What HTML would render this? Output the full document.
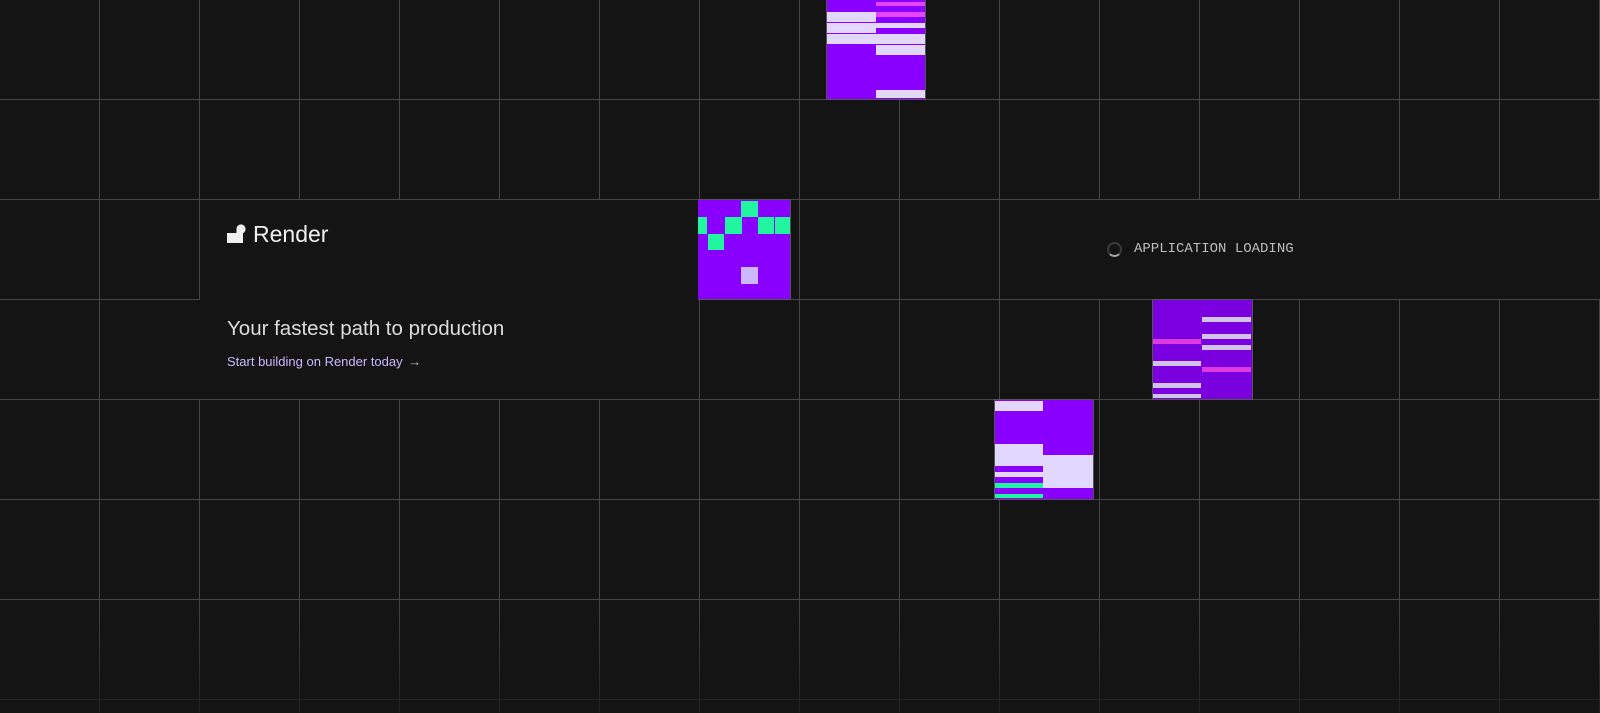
<!DOCTYPE html>
<html><head><style>
html,body{margin:0;padding:0;}
body{width:1600px;height:713px;overflow:hidden;background:#141414;position:relative;font-family:"Liberation Sans",sans-serif;}
.grid{position:absolute;left:0;top:0;width:1600px;height:713px;
background-image:linear-gradient(to right,#444 1px,transparent 1px),linear-gradient(to bottom,#444 1px,transparent 1px);
background-size:100px 100px;background-position:99px 99px;}
.fade{position:absolute;left:0;top:600px;width:1600px;height:113px;background:linear-gradient(to bottom,rgba(20,20,20,0),rgba(20,20,20,0.75));}
.abs{position:absolute;}
.blk{position:absolute;box-sizing:border-box;border:1px solid #555;overflow:hidden;}
.blk div{position:absolute;}
.L{background:#e2d8ff;}
.P{background:#8a00ff;}
.M{background:#e545ff;}
.G{background:#22f5a0;}
</style></head><body>
<div class="grid"></div>
<div class="fade"></div>

<!-- card -->
<div class="abs" style="left:200px;top:200px;width:499px;height:199px;background:#141414"></div>
<div class="abs" style="left:199px;top:300px;width:500px;height:99px;background:#141414"></div>
<div class="abs" style="left:226px;top:224px;width:20px;height:20px">
<svg width="20" height="20" viewBox="0 0 20 20"><rect x="1" y="9" width="10" height="10" fill="#f0f0f0"/><circle cx="15" cy="5" r="4.6" fill="#f0f0f0"/><path d="M10.5 6 L19 7 L17 9.5 L17 19 L10 19 Z" fill="#f0f0f0"/></svg>
</div>
<div class="abs" style="left:253px;top:221px;font-size:23px;color:#f0f0f0;">Render</div>
<div class="abs" style="left:227px;top:317px;font-size:20.5px;color:#dcdcdc;">Your fastest path to production</div>
<div class="abs" style="left:227px;top:354px;font-size:13px;color:#c8b8ff;">Start building on Render today <span style="color:#bbb;margin-left:2px">→</span></div>

<!-- loading panel -->
<div class="abs" style="left:1001px;top:200px;width:599px;height:99px;background:#141414"></div>
<div class="abs" style="left:1107px;top:242px;width:11px;height:11px;border:2px solid #3a3a3a;border-bottom-color:#aaa;border-radius:50%"></div>
<div class="abs" style="left:1134px;top:241px;font-family:'Liberation Mono',monospace;font-size:14px;color:#bdbdbd;">APPLICATION LOADING</div>

<!-- block A -->
<div class="blk" style="left:826px;top:-1px;width:100px;height:101px;background:#8a00ff">
<div class="L" style="left:0;top:12px;width:49px;height:10px"></div>
<div class="L" style="left:0;top:23px;width:49px;height:10px"></div>
<div class="L" style="left:0;top:34px;width:49px;height:10px"></div>
<div class="M" style="left:49px;top:2px;width:50px;height:4px"></div>
<div class="M" style="left:49px;top:12px;width:50px;height:5px"></div>
<div class="L" style="left:49px;top:23px;width:50px;height:5px"></div>
<div class="L" style="left:49px;top:34px;width:50px;height:10px"></div>
<div class="L" style="left:49px;top:45px;width:50px;height:10px"></div>
<div class="L" style="left:49px;top:90px;width:50px;height:8px"></div>
</div>

<!-- block B -->
<div class="blk" style="left:698px;top:199px;width:93px;height:101px;background:#8a00ff;border-left:none">
<div class="G" style="left:43px;top:1px;width:17px;height:16px"></div>
<div class="G" style="left:0;top:17px;width:9px;height:17px"></div>
<div class="G" style="left:27px;top:17px;width:17px;height:17px"></div>
<div class="G" style="left:60px;top:17px;width:16px;height:17px"></div>
<div class="G" style="left:77px;top:17px;width:15px;height:17px"></div>
<div class="G" style="left:10px;top:34px;width:16px;height:16px"></div>
<div style="left:43px;top:67px;width:17px;height:17px;background:#ccb8ff"></div>
</div>

<!-- block C -->
<div class="blk" style="left:1152px;top:299px;width:101px;height:101px;background:#7a00e0">
<div style="left:0;top:39px;width:48px;height:5px;background:#dd3ae0"></div>
<div style="left:0;top:61px;width:48px;height:5px;background:#d0c4ee"></div>
<div style="left:0;top:83px;width:48px;height:5px;background:#d0c4ee"></div>
<div style="left:0;top:94px;width:48px;height:4px;background:#d0c4ee"></div>
<div style="left:49px;top:17px;width:49px;height:5px;background:#d0c4ee"></div>
<div style="left:49px;top:34px;width:49px;height:5px;background:#d0c4ee"></div>
<div style="left:49px;top:45px;width:49px;height:5px;background:#d0c4ee"></div>
<div style="left:49px;top:67px;width:49px;height:5px;background:#dd3ae0"></div>
</div>

<!-- block D -->
<div class="blk" style="left:994px;top:399px;width:100px;height:101px;background:#8a00ff">
<div class="L" style="left:0;top:1px;width:48px;height:10px"></div>
<div class="L" style="left:0;top:44px;width:48px;height:22px"></div>
<div class="L" style="left:0;top:72px;width:48px;height:5px"></div>
<div class="G" style="left:0;top:83px;width:48px;height:5px"></div>
<div class="G" style="left:0;top:94px;width:48px;height:4px"></div>
<div class="L" style="left:48px;top:55px;width:50px;height:33px"></div>
</div>
</body></html>
